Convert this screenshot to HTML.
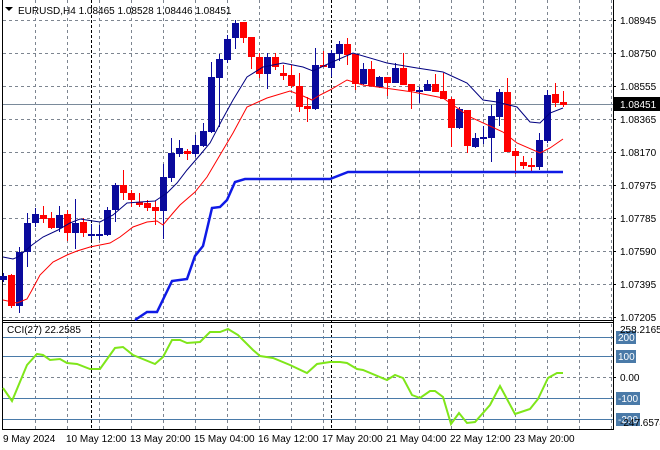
<!DOCTYPE html><html><head><style>body{margin:0;background:#fff}svg{display:block}text{font-family:"Liberation Sans",sans-serif;font-size:10px;fill:#000}</style></head><body>
<svg width="660" height="450" viewBox="0 0 660 450" xmlns="http://www.w3.org/2000/svg">
<rect width="660" height="450" fill="#fff"/>
<g stroke="#7d8590" stroke-width="1" stroke-dasharray="3,3" fill="none">
<path d="M35.5 0V429M67.5 0V429M99.5 0V429M131.5 0V429M163.5 0V429M195.5 0V429M227.5 0V429M259.5 0V429M291.5 0V429M323.5 0V429M355.5 0V429M387.5 0V429M419.5 0V429M451.5 0V429M483.5 0V429M515.5 0V429M547.5 0V429M579.5 0V429M611.5 0V429"/>
<path d="M3 20.5H614M3 53.5H614M3 86.5H614M3 119.5H614M3 152.5H614M3 185.5H614M3 218.5H614M3 251.5H614M3 284.5H614M3 317.5H614M3 377.5H614"/>
</g>
<g stroke="#000" stroke-dasharray="3,2" fill="none"><path d="M91.5 0V429M331.5 0V429"/></g>
<g stroke="#4a7aa8" fill="none"><path d="M3 337.5H614M3 356.5H614M3 398.5H614M3 419.5H614"/></g>
<path d="M3 104.5H614" stroke="#7a8a9a" fill="none"/>
<g stroke="#000" fill="none"><path d="M2.5 0V429.5H614M2.5 320.5H614M2.5 322.5H614M613.5 0V430"/></g>
<!-- candles -->
<g stroke="#ff0000" fill="#ff0000" stroke-width="1">
<path fill="none" d="M11.5 274V308M43.5 206V223M51.5 212V229M67.5 210V241M83.5 218V237M123.5 170V200M131.5 190V207M139.5 193V207M147.5 200V211M155.5 201V225M187.5 149V160M243.5 22V43M251.5 37V69M259.5 53V78M275.5 53V70M283.5 65V80M291.5 65V88M299.5 73V112M307.5 97V122M323.5 51V67M347.5 38V65M355.5 54V90M371.5 61V86M387.5 77V96M403.5 53V85M411.5 84V109M435.5 74V92M443.5 73V99M451.5 97V147M467.5 110V153M507.5 78V152M515.5 148V174M523.5 156V169M531.5 158V173M555.5 83V107M563.5 91V107"/>
<g stroke="none">
<rect x="8" y="275" width="7" height="31"/><rect x="40" y="215" width="7" height="4"/><rect x="48" y="218" width="7" height="10"/><rect x="64" y="214" width="7" height="19"/><rect x="80" y="222" width="7" height="11"/><rect x="120" y="185" width="7" height="8"/><rect x="128" y="193" width="7" height="7"/><rect x="136" y="202" width="7" height="3"/><rect x="144" y="203" width="7" height="5"/><rect x="152" y="207" width="7" height="4"/><rect x="184" y="151" width="7" height="3"/><rect x="240" y="22" width="7" height="16"/><rect x="248" y="37" width="7" height="20"/><rect x="256" y="57" width="7" height="17"/><rect x="272" y="57" width="7" height="10"/><rect x="280" y="73" width="7" height="3"/><rect x="288" y="75" width="7" height="11"/><rect x="296" y="86" width="7" height="21"/><rect x="304" y="106" width="7" height="3"/><rect x="320" y="65" width="7" height="2"/><rect x="344" y="44" width="7" height="11"/><rect x="352" y="54" width="7" height="30"/><rect x="368" y="69" width="7" height="17"/><rect x="384" y="77" width="7" height="6"/><rect x="400" y="68" width="7" height="17"/><rect x="408" y="84" width="7" height="7"/><rect x="432" y="84" width="7" height="8"/><rect x="440" y="91" width="7" height="8"/><rect x="448" y="99" width="7" height="29"/><rect x="464" y="110" width="7" height="36"/><rect x="504" y="92" width="7" height="60"/><rect x="512" y="151" width="7" height="5"/><rect x="520" y="162" width="7" height="4"/><rect x="528" y="165" width="7" height="2"/><rect x="552" y="94" width="7" height="9"/><rect x="560" y="102" width="7" height="3"/>
</g></g>
<g stroke="#0a0a9c" fill="#0a0a9c">
<path fill="none" d="M3.5 273V282M19.5 247V313M27.5 213V267M35.5 208V227M59.5 206V232M75.5 199V249M91.5 224V240M99.5 225V240M107.5 207V236M115.5 183V222M163.5 164V239M171.5 138V182M179.5 140V157M195.5 135V157M203.5 123V147M211.5 62V133M219.5 54V127M227.5 35V63M235.5 20V49M267.5 53V89M315.5 48V110M331.5 50V77M339.5 41V61M363.5 63V85M379.5 76V88M395.5 63V83M419.5 87V103M427.5 80V91M459.5 107V129M475.5 133V148M483.5 126V144M491.5 105V162M499.5 89V126M539.5 133V170M547.5 90V143"/>
<g stroke="none">
<rect x="0" y="276" width="7" height="4"/><rect x="16" y="252" width="7" height="54"/><rect x="24" y="223" width="7" height="29"/><rect x="32" y="214" width="7" height="9"/><rect x="56" y="215" width="7" height="13"/><rect x="72" y="223" width="7" height="10"/><rect x="88" y="234" width="7" height="2"/><rect x="96" y="234" width="7" height="2"/><rect x="104" y="210" width="7" height="25"/><rect x="112" y="185" width="7" height="25"/><rect x="160" y="177" width="7" height="34"/><rect x="168" y="153" width="7" height="25"/><rect x="176" y="148" width="7" height="6"/><rect x="192" y="145" width="7" height="9"/><rect x="200" y="131" width="7" height="15"/><rect x="208" y="77" width="7" height="55"/><rect x="216" y="59" width="7" height="19"/><rect x="224" y="39" width="7" height="21"/><rect x="232" y="23" width="7" height="15"/><rect x="264" y="57" width="7" height="17"/><rect x="312" y="65" width="7" height="44"/><rect x="328" y="53" width="7" height="15"/><rect x="336" y="44" width="7" height="10"/><rect x="360" y="69" width="7" height="15"/><rect x="376" y="77" width="7" height="10"/><rect x="392" y="68" width="7" height="15"/><rect x="416" y="90" width="7" height="2"/><rect x="424" y="84" width="7" height="7"/><rect x="456" y="109" width="7" height="19"/><rect x="472" y="138" width="7" height="9"/><rect x="480" y="137" width="7" height="2"/><rect x="488" y="116" width="7" height="22"/><rect x="496" y="92" width="7" height="25"/><rect x="536" y="140" width="7" height="27"/><rect x="544" y="95" width="7" height="46"/>
</g></g>
<!-- MAs -->
<polyline fill="none" stroke="#000080" stroke-width="1" points="3,257 13,259 18,257 32,245 43,237 58,230 70,223 80,219 93,221 100,222 113,215 127,203 140,202 155,201 167,193 177,183 187,170 200,155 210,143 222,120 233,100 247,77 263,67 283,63 303,67 313,71 330,63 353,53 387,63 417,68 443,72 467,83 483,100 497,102 517,107 530,122 540,123 550,113 563,108"/>
<polyline fill="none" stroke="#ff0000" stroke-width="1" points="3,300 17,303 27,299 32,290 40,275 53,262 67,255 77,251 90,247 110,243 120,237 133,227 147,222 157,221 163,225 173,213 180,205 195,192 207,177 220,155 233,133 247,107 267,98 290,91 303,96 312,100 320,95 330,90 347,80 363,85 413,92 443,98 470,117 503,132 517,143 540,153 550,148 563,139"/>
<polyline fill="none" stroke="#0f1ae6" stroke-width="2.5" points="135,320 147,312 157,312 172,281 187,279 195,256 203,246 208,225 212,208 220,207 227,200 235,182 245,179 330,179 348,172 563,172"/>
<!-- CCI -->
<polyline fill="none" stroke="#7fe61a" stroke-width="2" points="3,388 12,401 27,365 37,354 43,355 50,360 60,359 67,363 77,364 90,369 100,369 115,348 123,347 133,355 155,364 163,357 172,340 180,340 187,343 200,342 210,332 220,332 228,329 238,335 253,350 260,356 273,358 290,365 307,373 317,364 330,362 340,362 347,363 357,369 363,370 387,380 395,375 403,378 412,395 420,398 430,391 435,391 443,397 451,424 459,413 467,423 475,422 490,405 500,386 515,414 530,409 538,399 548,378 557,373 563,373"/>
<!-- labels -->
<path d="M5 7H13L9 11Z" fill="#000"/>
<text x="18" y="14">EURUSD,H4  1.08465 1.08528 1.08446 1.08451</text>
<text x="7" y="333">CCI(27) 22.2585</text>
<g>
<text x="620" y="24">1.08945</text><text x="620" y="57">1.08750</text><text x="620" y="90">1.08555</text><text x="620" y="123">1.08365</text><text x="620" y="156">1.08170</text><text x="620" y="189">1.07975</text><text x="620" y="222">1.07785</text><text x="620" y="255">1.07590</text><text x="620" y="288">1.07395</text><text x="620" y="321">1.07205</text>
</g>
<rect x="614" y="97" width="46" height="14" fill="#000"/><text x="620" y="108" style="fill:#fff">1.08451</text>
<g fill="#4a7aa8"><rect x="616" y="331" width="20" height="13"/><rect x="616" y="350" width="20" height="13"/><rect x="616" y="392" width="24" height="13"/><rect x="616" y="413" width="24" height="13"/></g>
<text x="620" y="333">258.2165</text>
<text x="618" y="341" style="fill:#fff">200</text><text x="618" y="360" style="fill:#fff">100</text><text x="618" y="402" style="fill:#fff">-100</text><text x="618" y="423" style="fill:#fff">-200</text>
<text x="620" y="381">0.00</text>
<text x="620" y="426">-247.6574</text>
<g stroke="#000" fill="none"><path d="M613 20.5h3M613 53.5h3M613 86.5h3M613 119.5h3M613 152.5h3M613 185.5h3M613 218.5h3M613 251.5h3M613 284.5h3M613 317.5h3M613 377.5h3"/></g>
<text x="3" y="442">9 May 2024</text><text x="66" y="442">10 May 12:00</text><text x="130" y="442">13 May 20:00</text><text x="194" y="442">15 May 04:00</text><text x="258" y="442">16 May 12:00</text><text x="322" y="442">17 May 20:00</text><text x="386" y="442">21 May 04:00</text><text x="450" y="442">22 May 12:00</text><text x="514" y="442">23 May 20:00</text>
</svg>
</body></html>
